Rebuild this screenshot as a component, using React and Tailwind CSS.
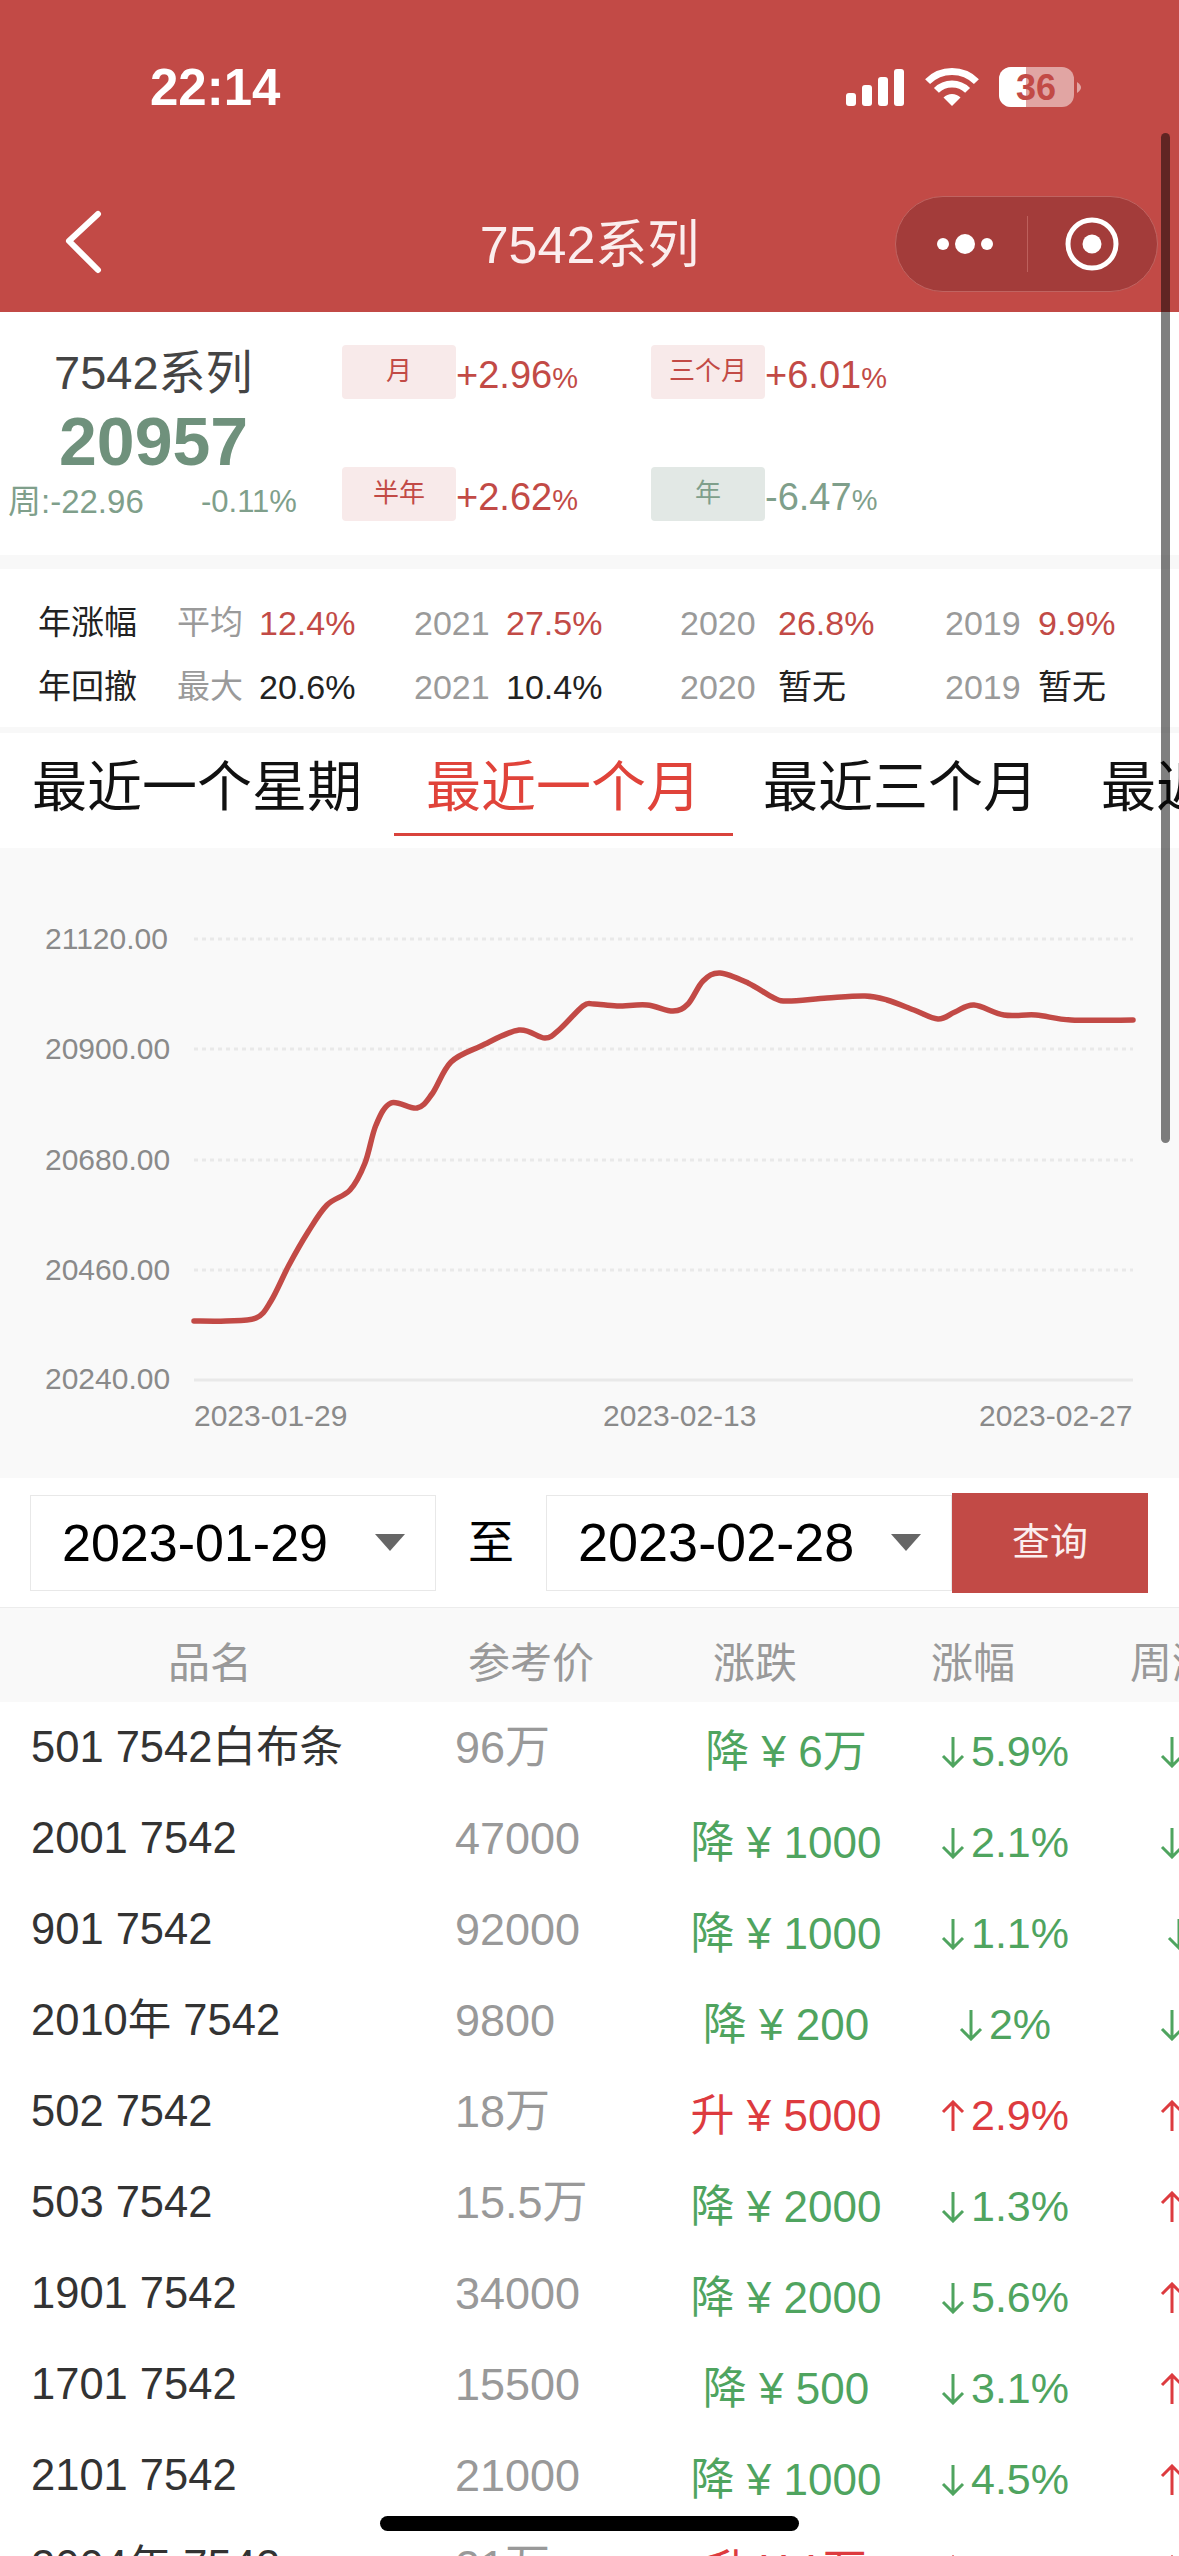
import React from 'react'

const FONT = { fontFamily: '"Liberation Sans", "Noto Sans CJK SC", sans-serif' }

// line of the chart, traced off the picture (svg coords)
const LINE = [
  [194, 473], [226, 473], [256, 470], [271, 453], [289, 417], [308, 384], [327, 357], [350, 342],
  [365, 315], [376, 277], [391, 255], [417, 260], [432, 246], [451, 214], [481, 198], [519, 182],
  [545, 190], [560, 181], [583, 158], [594, 156], [617, 158], [647, 157], [673, 163], [688, 156],
  [703, 133], [720, 125], [748, 135], [774, 150], [788, 153], [827, 150], [865, 148], [887, 152],
  [914, 162], [938, 171], [955, 164], [974, 157], [1004, 167], [1036, 167], [1071, 172], [1133, 172],
]

function smoothPath(pts) {
  let d = `M${pts[0][0]} ${pts[0][1]}`
  for (let i = 0; i < pts.length - 1; i++) {
    const p0 = pts[i - 1] || pts[i]
    const p1 = pts[i]
    const p2 = pts[i + 1]
    const p3 = pts[i + 2] || p2
    const c1x = p1[0] + (p2[0] - p0[0]) / 6
    const c1y = p1[1] + (p2[1] - p0[1]) / 6
    const c2x = p2[0] - (p3[0] - p1[0]) / 6
    const c2y = p2[1] - (p3[1] - p1[1]) / 6
    d += ` C${c1x} ${c1y} ${c2x} ${c2y} ${p2[0]} ${p2[1]}`
  }
  return d
}

const GRID = [
  { y: 91, label: '21120.00' },
  { y: 201, label: '20900.00' },
  { y: 312, label: '20680.00' },
  { y: 422, label: '20460.00' },
]

const ROWS = [
  { name: '501 7542白布条', price: '96万', change: '降 ¥ 6万', pct: '5.9%', up: false, weekUp: false },
  { name: '2001 7542', price: '47000', change: '降 ¥ 1000', pct: '2.1%', up: false, weekUp: false },
  { name: '901 7542', price: '92000', change: '降 ¥ 1000', pct: '1.1%', up: false, weekUp: false, shift: true },
  { name: '2010年 7542', price: '9800', change: '降 ¥ 200', pct: '2%', up: false, weekUp: false },
  { name: '502 7542', price: '18万', change: '升 ¥ 5000', pct: '2.9%', up: true, weekUp: true },
  { name: '503 7542', price: '15.5万', change: '降 ¥ 2000', pct: '1.3%', up: false, weekUp: true },
  { name: '1901 7542', price: '34000', change: '降 ¥ 2000', pct: '5.6%', up: false, weekUp: true },
  { name: '1701 7542', price: '15500', change: '降 ¥ 500', pct: '3.1%', up: false, weekUp: true },
  { name: '2101 7542', price: '21000', change: '降 ¥ 1000', pct: '4.5%', up: false, weekUp: true },
  { name: '2004年 7542', price: '21万', change: '升 ¥ 1万', pct: '2.8%', up: true, weekUp: true },
]

function Arrow({ up }) {
  return (
    <svg width="24" height="32" viewBox="0 0 24 32" className="block shrink-0" fill="none" stroke="currentColor" strokeWidth="3">
      {up ? <path d="M12 31V2M2 12L12 2L22 12" /> : <path d="M12 1V30M2 20L12 30L22 20" />}
    </svg>
  )
}

function StatusIcons() {
  return (
    <svg width="240" height="44" viewBox="846 66 240 44" className="block">
      <rect x="846" y="93" width="10" height="13" rx="3" fill="#fff" />
      <rect x="862" y="85" width="10" height="21" rx="3" fill="#fff" />
      <rect x="878" y="77" width="10" height="29" rx="3" fill="#fff" />
      <rect x="894" y="69" width="10" height="37" rx="3" fill="#fff" />
      <path d="M927.6 81.6A34.5 34.5 0 0 1 976.4 81.6" stroke="#fff" strokeWidth="7" fill="none" />
      <path d="M936.4 90.4A22 22 0 0 1 967.6 90.4" stroke="#fff" strokeWidth="7" fill="none" />
      <path d="M952 106L943.5 97.5A12 12 0 0 1 960.5 97.5Z" fill="#fff" />
      <rect x="999" y="67" width="75" height="40" rx="12" fill="#fff" fillOpacity="0.5" />
      <path d="M1026 67H1011A12 12 0 0 0 999 79V95A12 12 0 0 0 1011 107H1026Z" fill="#fff" />
      <path d="M1077 82C1080 84 1081 86 1081 87.500C1081 89 1080 91 1077 93Z" fill="#fff" fillOpacity="0.5" />
      <text x="1036" y="100" textAnchor="middle" className="fill-[#c24a46] text-[36px] font-bold">36</text>
    </svg>
  )
}

function Capsule() {
  return (
    <div className="flex h-[96px] w-[263px] items-center rounded-full border border-[#c06461] bg-[#a33c3a]">
      <div className="flex w-[131px] items-center justify-center gap-[6px] pl-[7px]">
        <span className="h-[12px] w-[12px] rounded-full bg-white"></span>
        <span className="h-[20px] w-[20px] rounded-full bg-white"></span>
        <span className="h-[12px] w-[12px] rounded-full bg-white"></span>
      </div>
      <div className="h-[56px] w-px bg-[#bd605c]"></div>
      <div className="flex flex-1 items-center justify-center pr-[2px]">
        <svg width="54" height="54" viewBox="0 0 54 54">
          <circle cx="27" cy="27" r="24" fill="none" stroke="#fff" strokeWidth="5" />
          <circle cx="27" cy="27" r="9.500" fill="#fff" />
        </svg>
      </div>
    </div>
  )
}

function Stat({ tag, value, green }) {
  return (
    <div className="flex h-[54px] items-center">
      <div className={`flex h-[54px] w-[114px] items-center justify-center rounded-[4px] pb-[2px] text-[26px] ${green ? 'bg-[#e2e8e5] text-[#7f9f8b]' : 'bg-[#f8eaea] text-[#c24a46]'}`}>
        {tag}
      </div>
      <div className={`whitespace-nowrap pt-[8px] text-[38px] leading-[40px] ${green ? 'text-[#7f9f8b]' : 'text-[#c24a46]'}`}>
        {value}
        <span className="text-[29px]">%</span>
      </div>
    </div>
  )
}

function YearRow({ label, first, cells, firstRed }) {
  return (
    <div className="grid h-[64px] grid-cols-[139px_237px_266px_265px_1fr] items-center pl-[38px] text-[34px]">
      <div className="text-[33px] text-[#222]">{label}</div>
      <div className="flex">
        <span className="w-[82px] text-[33px] text-[#9a9a9a]">{first[0]}</span>
        <span className={firstRed ? 'text-[#c24a46]' : 'text-[#222]'}>{first[1]}</span>
      </div>
      {cells.map((c) => (
        <div key={c.year} className="flex">
          <span className={`${c.w} text-[#9a9a9a]`}>{c.year}</span>
          <span className={firstRed ? 'text-[#c24a46]' : 'text-[#222]'}>{c.value}</span>
        </div>
      ))}
    </div>
  )
}

function Chart() {
  return (
    <svg width="1179" height="630" viewBox="0 0 1179 630" className="block bg-[#f9f9f9]">
      {GRID.map((g) => (
        <g key={g.label}>
          <line x1="194" x2="1133" y1={g.y} y2={g.y} stroke="#e9e9e9" strokeWidth="3" strokeDasharray="4 4" />
          <text x="45" y={g.y + 10} className="fill-[#8a8a8a] text-[30px]">{g.label}</text>
        </g>
      ))}
      <line x1="194" x2="1133" y1="532" y2="532" stroke="#e9e9e9" strokeWidth="3" />
      <text x="45" y="541" className="fill-[#8a8a8a] text-[30px]">20240.00</text>
      <text x="194" y="578" className="fill-[#8a8a8a] text-[30px]">2023-01-29</text>
      <text x="603" y="578" className="fill-[#8a8a8a] text-[30px]">2023-02-13</text>
      <text x="979" y="578" className="fill-[#8a8a8a] text-[30px]">2023-02-27</text>
      <path d={smoothPath(LINE)} fill="none" stroke="#c24a46" strokeWidth="5.500" strokeLinecap="round" strokeLinejoin="round" />
    </svg>
  )
}

function DateSelect({ value, size }) {
  return (
    <div className={`flex h-[96px] w-[406px] shrink-0 items-center justify-between border border-[#e8e8e8] pl-[31px] pr-[30px] text-black ${size}`}>
      <span>{value}</span>
      <svg width="30" height="17" viewBox="0 0 30 17">
        <polygon points="0,0 30,0 15,17" fill="#666" />
      </svg>
    </div>
  )
}

export default function App() {
  return (
    <div style={FONT} className="relative h-[2556px] w-[1179px] overflow-hidden bg-white">
      {/* header */}
      <div className="h-[312px] bg-[#c24a46]">
        <div className="flex h-[176px] items-center justify-between pl-[150px] pr-[93px]">
          <span className="text-[51px] font-bold text-white">22:14</span>
          <StatusIcons />
        </div>
        <div className="grid h-[136px] grid-cols-[1fr_auto_1fr] items-center">
          <div className="pl-[62px] pb-[4px]">
            <svg width="42" height="64" viewBox="0 0 42 64" className="block">
              <path d="M36 4L7 31L36 60" fill="none" stroke="#fff" strokeWidth="6" strokeLinecap="round" strokeLinejoin="round" />
            </svg>
          </div>
          <div className="pt-[2px] text-[52px] text-[#fbeeee]">7542系列</div>
          <div className="flex justify-end pr-[21px]">
            <Capsule />
          </div>
        </div>
      </div>

      {/* summary */}
      <div className="flex h-[243px]">
        <div className="w-[342px]">
          <div className="pl-[54px] pt-[33px] text-[47px] leading-[56px] text-[#444]">7542系列</div>
          <div className="pl-[59px] pt-[4px] text-[68px] font-bold leading-[72px] text-[#6f917c]">20957</div>
          <div className="flex pl-[8px] pt-[7px] leading-[36px] text-[#7f9f8b]">
            <span className="w-[193px] text-[33px]">周:-22.96</span>
            <span className="text-[31px]">-0.11%</span>
          </div>
        </div>
        <div className="grid grid-cols-[309px_1fr] content-start gap-y-[68px] pt-[33px]">
          <Stat tag="月" value="+2.96" />
          <Stat tag="三个月" value="+6.01" />
          <Stat tag="半年" value="+2.62" />
          <Stat tag="年" value="-6.47" green />
        </div>
      </div>
      <div className="h-[14px] bg-[#f8f8f8]"></div>

      {/* yearly figures */}
      <div className="flex h-[158px] flex-col justify-center pt-[14px]">
        <YearRow
          label="年涨幅"
          first={['平均', '12.4%']}
          firstRed
          cells={[
            { year: '2021', value: '27.5%', w: 'w-[92px]' },
            { year: '2020', value: '26.8%', w: 'w-[98px]' },
            { year: '2019', value: '9.9%', w: 'w-[93px]' },
          ]}
        />
        <YearRow
          label="年回撤"
          first={['最大', '20.6%']}
          cells={[
            { year: '2021', value: '10.4%', w: 'w-[92px]' },
            { year: '2020', value: '暂无', w: 'w-[98px]' },
            { year: '2019', value: '暂无', w: 'w-[93px]' },
          ]}
        />
      </div>
      <div className="h-[6px] bg-[#f8f8f8]"></div>

      {/* tabs */}
      <div className="flex h-[115px] overflow-hidden whitespace-nowrap text-[55px] leading-[108px] text-[#111]">
        <div className="h-[103px] shrink-0 px-[32px]">最近一个星期</div>
        <div className="h-[103px] shrink-0 border-b-[3px] border-[#d9433c] px-[32px] text-[#e0433a]">最近一个月</div>
        <div className="h-[103px] shrink-0 px-[30px]">最近三个月</div>
        <div className="h-[103px] shrink-0 px-[33px]">最近六个月</div>
      </div>

      <Chart />

      {/* date filter */}
      <div className="flex h-[130px] items-center border-b border-[#ececec] pl-[30px]">
        <DateSelect value="2023-01-29" size="text-[52px]" />
        <div className="w-[110px] shrink-0 text-center text-[46px] text-black">至</div>
        <DateSelect value="2023-02-28" size="text-[54px]" />
        <div className="flex h-[100px] w-[196px] shrink-0 items-center justify-center bg-[#c24a46] text-[38px] text-[#fbeeee]">查询</div>
      </div>

      {/* table */}
      <div className="flex h-[94px] items-center overflow-hidden whitespace-nowrap bg-[#f9f9f9] pt-[16px] text-[42px] text-[#999]">
        <div className="w-[420px] shrink-0 text-center">品名</div>
        <div className="w-[222px] shrink-0 text-center">参考价</div>
        <div className="w-[226px] shrink-0 text-center">涨跌</div>
        <div className="w-[210px] shrink-0 text-center">涨幅</div>
        <div className="shrink-0 pl-[52px]">周涨幅</div>
      </div>
      {ROWS.map((r) => (
        <div key={r.name} className="flex h-[91px] items-center overflow-hidden whitespace-nowrap">
          <div className="w-[455px] shrink-0 pl-[31px] text-[43.500px] text-[#333]">{r.name}</div>
          <div className="w-[221px] shrink-0 text-[45px] text-[#999]">{r.price}</div>
          <div className={`w-[220px] shrink-0 pt-[8px] text-center text-[44px] ${r.up ? 'text-[#dd3b3f]' : 'text-[#4fa45f]'}`}>{r.change}</div>
          <div className={`flex w-[218px] shrink-0 items-center justify-center gap-[6px] pt-[8px] text-[43px] ${r.up ? 'text-[#dd3b3f]' : 'text-[#4fa45f]'}`}>
            <Arrow up={r.up} />
            <span>{r.pct}</span>
          </div>
          <div className={`shrink-0 pt-[8px] ${r.shift ? 'pl-[53px]' : 'pl-[46px]'} ${r.weekUp ? 'text-[#dd3b3f]' : 'text-[#4fa45f]'}`}>
            <Arrow up={r.weekUp} />
          </div>
        </div>
      ))}

      {/* overlays */}
      <div className="absolute left-[1161px] top-[133px] h-[1010px] w-[9px] rounded-full bg-black/50"></div>
      <div className="absolute left-[380px] top-[2516px] h-[15px] w-[419px] rounded-full bg-black"></div>
    </div>
  )
}
